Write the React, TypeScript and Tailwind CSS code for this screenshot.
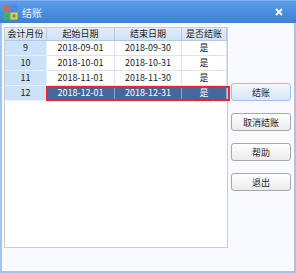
import React from 'react';

const rows = [
  { month: '9', start: '2018-09-01', end: '2018-09-30', done: '是' },
  { month: '10', start: '2018-10-01', end: '2018-10-31', done: '是' },
  { month: '11', start: '2018-11-01', end: '2018-11-30', done: '是' },
  { month: '12', start: '2018-12-01', end: '2018-12-31', done: '是' },
];

const cols = ['w-[42px]', 'w-[68px]', 'w-[67px]', 'w-[45px]'];

const AppIcon = () => (
  <svg width="15" height="15" viewBox="0 0 15 15">
    <rect x="1.5" y="1.5" width="5" height="5" fill="none" stroke="#ef5f3a" strokeWidth="2" />
    <rect x="8.5" y="1.5" width="5" height="5" fill="none" stroke="#3a8cf2" strokeWidth="2" />
    <rect x="1.5" y="8.5" width="5" height="5" fill="none" stroke="#36c24a" strokeWidth="2" />
    <rect x="8.5" y="8.5" width="5" height="5" fill="none" stroke="#f3d417" strokeWidth="2" />
  </svg>
);

const Button: React.FC<{ label: string; primary?: boolean }> = ({ label, primary }) => (
  <button
    className={`w-[60px] h-[18px] rounded-[3px] border text-[9px] leading-none text-[#1b1b1b] ${
      primary
        ? 'border-[#9cc0ea] bg-gradient-to-b from-[#f1f7fe] to-[#d7e8fa]'
        : 'border-[#a8a8a8] bg-gradient-to-b from-[#ffffff] to-[#ebebeb]'
    }`}
  >
    {label}
  </button>
);

export default function App() {
  return (
    <div
      className="w-[296px] h-[273px] flex flex-col text-[9px]"
      style={{ fontFamily: '"Noto Sans CJK SC", "Noto Sans", sans-serif' }}
    >
      {/* Title bar */}
      <div className="h-[23px] shrink-0 flex items-center px-[3px] bg-gradient-to-b from-[#5a9de8] to-[#3b80d7] border-t border-[#7fb2ee]">
        <AppIcon />
        <span className="ml-[4px] text-[10px] text-[#e9f1fc]">结账</span>
        <svg className="ml-auto mr-[10px]" width="8" height="8" viewBox="0 0 8 8">
          <path d="M1 1L7 7M7 1L1 7" stroke="#ffffff" strokeWidth="1.8" />
        </svg>
      </div>

      {/* Body */}
      <div className="flex-1 flex border-x-2 border-b-2 border-[#a6c5ec] bg-[#f8faff] pt-[4px] pl-[2px]">
        {/* Grid panel */}
        <div className="w-[224px] h-[221px] border border-[#c9ccd2] bg-white">
          <div className="flex h-[13px] bg-gradient-to-b from-[#e1edf9] to-[#cfe1f5]">
            {['会计月份', '起始日期', '结束日期', '是否结账'].map((h, i) => (
              <div
                key={h}
                className={`${cols[i]} flex items-center justify-center border-r border-b border-[#b3c8de] text-[#1a1a1a]`}
              >
                {h}
              </div>
            ))}
          </div>
          {rows.map((r, idx) => {
            const sel = idx === rows.length - 1;
            return (
              <div key={r.month} className="relative flex h-[15px]">
                <div
                  className={`${cols[0]} flex items-center justify-center bg-[#cbe2f8] border-r border-b border-[#e6f0fb] text-[#1a1a1a]`}
                >
                  {r.month}
                </div>
                {[r.start, r.end, r.done].map((v, j) => (
                  <div
                    key={j}
                    className={`${cols[j + 1]} flex items-center justify-center border-r border-b ${
                      sel ? 'bg-[#44679f] text-white border-[#8da5c8]' : 'bg-white text-[#1a1a1a] border-[#dde3ea]'
                    }`}
                  >
                    {v}
                  </div>
                ))}
                {sel && (
                  <div className="absolute left-[41px] top-0 w-[184px] h-[15px] border-2 border-[#e8262c]" />
                )}
              </div>
            );
          })}
        </div>

        {/* Buttons */}
        <div className="ml-[3px] pt-[56px] flex flex-col gap-[12px]">
          <Button label="结账" primary />
          <Button label="取消结账" />
          <Button label="帮助" />
          <Button label="退出" />
        </div>
      </div>
    </div>
  );
}
